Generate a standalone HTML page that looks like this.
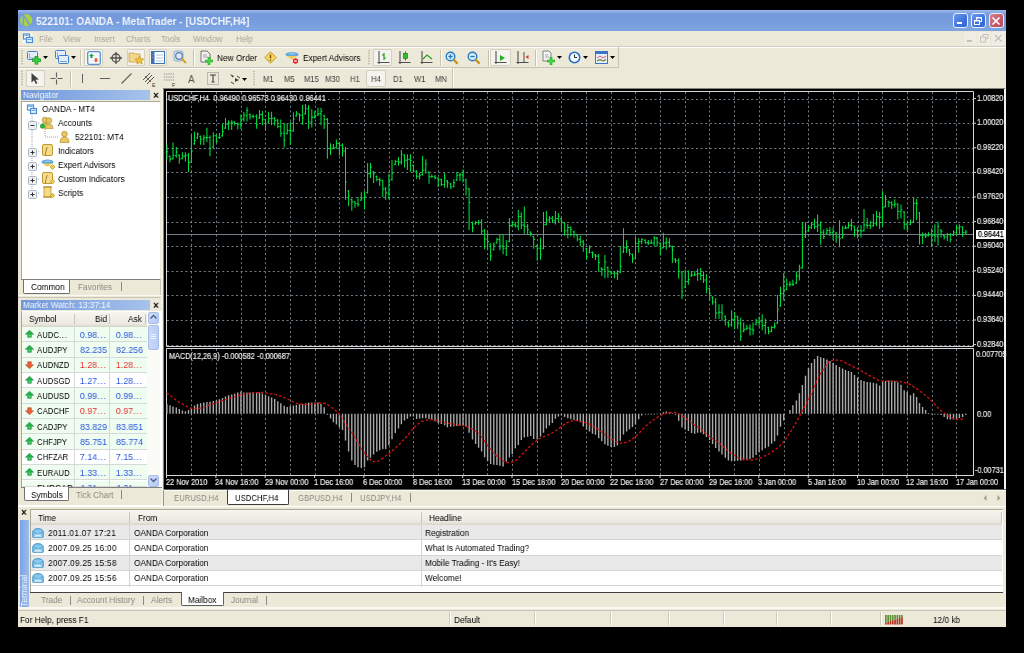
<!DOCTYPE html><html><head><meta charset="utf-8"><style>
*{margin:0;padding:0;box-sizing:border-box}
.pl,.dl,.ct,.cur,.t,.ttxt,.hdr span{will-change:transform}
.pl,.dl,.ct{color:#f4f4f4!important;-webkit-text-stroke:0.2px #e0e0e0}
.ct{word-spacing:0.3px}
html,body{width:1024px;height:653px;overflow:hidden;background:#000;font-family:"Liberation Sans",sans-serif}
.a{position:absolute}
.t{position:absolute;white-space:nowrap;font-size:9.2px;line-height:12px;color:#000;transform:scaleX(.9);transform-origin:0 0}
.r{transform-origin:100% 0}
.win{position:absolute;left:18px;top:10px;width:988px;height:617px;background:#ece9d8}
.title{position:absolute;left:18px;top:10px;width:988px;height:21px;
 background:linear-gradient(#9cbbea 0px,#8aaee6 2px,#7499dc 4px,#769cdd 12px,#7aa3e0 17px,#7ea6e2 19px,#7d9fdd 21px)}
.ttxt{position:absolute;left:36px;top:14.5px;font-size:11px;line-height:13px;font-weight:bold;color:#eef3fc;white-space:nowrap;transform:scaleX(.925);transform-origin:0 0}
.menu{color:#a9a79c}
.pl{position:absolute;left:977px;font-size:8.2px;line-height:12px;color:#e8e8e8;white-space:nowrap;transform:scaleX(.89);transform-origin:0 0}
.dl{position:absolute;top:477.3px;font-size:8.2px;line-height:12px;color:#e8e8e8;white-space:nowrap;transform:scaleX(.89);transform-origin:0 0}
.ct{position:absolute;font-size:8.2px;line-height:12px;color:#e8e8e8;white-space:nowrap;transform:scaleX(.89);transform-origin:0 0}
.cur{position:absolute;left:975.5px;top:229.5px;width:28.5px;height:8.5px;background:#fff;overflow:hidden}
.cur span{position:absolute;left:2px;top:-1.2px;color:#000;-webkit-text-stroke:0.25px #000;font-size:8.2px;line-height:12px;white-space:nowrap;transform:scaleX(.87);transform-origin:0 0;will-change:transform}
.hdr{position:absolute;height:10px;background:linear-gradient(90deg,#7097da,#a6c3ec);overflow:hidden}
.hdr span{position:absolute;left:2px;top:-1px;color:#f2f6fe;font-size:9.2px;line-height:12px;white-space:nowrap;transform:scaleX(.9);transform-origin:0 0}
.x{position:absolute;font-size:10px;font-weight:bold;line-height:10px;color:#000}
.sep{position:absolute;width:1px;background:#c5c2b2;border-right:1px solid #fff}
.tb{font-size:10px;color:#000}
</style></head><body>
<div class="win"></div>
<div class="title"></div>
<svg class="a" style="left:20px;top:13px" width="14" height="15" viewBox="0 0 14 15"><circle cx="6.2" cy="7.2" r="6.1" fill="#a9d23e"/><path d="M3.3 0 L3.3 14" stroke="#7a9fde" stroke-width="1.5"/><path d="M3.8 2.5 L10 12.5" stroke="#7a9fde" stroke-width="1.7"/></svg>
<div class="ttxt">522101: OANDA - MetaTrader - [USDCHF,H4]</div>
<div class="a" style="left:953px;top:13px;width:15px;height:15px;background:linear-gradient(135deg,#6c98ee,#3f72dc 60%,#3563cf);border:1px solid #e8eefa;border-radius:3px"></div>
<div class="a" style="left:970.5px;top:13px;width:15px;height:15px;background:linear-gradient(135deg,#6c98ee,#3f72dc 60%,#3563cf);border:1px solid #e8eefa;border-radius:3px"></div>
<div class="a" style="left:988.5px;top:13px;width:15px;height:15px;background:linear-gradient(135deg,#d9838f,#c05a68 60%,#b24a5a);border:1px solid #e8eefa;border-radius:3px"></div>
<div class="a" style="left:957px;top:22px;width:5px;height:2px;background:#fff"></div>
<svg class="a" style="left:973px;top:16px" width="10" height="10" viewBox="0 0 10 10"><rect x="3.5" y="1.5" width="5" height="4" fill="none" stroke="#fff" stroke-width="1"/><rect x="3.5" y="1" width="5" height="1.5" fill="#fff"/><rect x="1.5" y="4.5" width="5" height="4" fill="#3f72dc" stroke="#fff" stroke-width="1"/><rect x="1.5" y="4" width="5" height="1.5" fill="#fff"/></svg>
<svg class="a" style="left:991px;top:16px" width="10" height="10" viewBox="0 0 10 10"><path d="M1.5 1.5L8.5 8.5M8.5 1.5L1.5 8.5" stroke="#fff" stroke-width="1.6"/></svg>
<svg class="a" style="left:22px;top:32px" width="12" height="12" viewBox="0 0 12 12"><rect x="0.5" y="0.5" width="10" height="11" fill="#fff" opacity="0.6"/><rect x="1.5" y="2" width="6" height="5" fill="#fff" stroke="#4a8fd8" stroke-width="1.2"/><rect x="4.5" y="5.5" width="6" height="5" fill="#dff0ff" stroke="#4a8fd8" stroke-width="1.2"/><path d="M2.5 3.5h4M5.5 7.5h4" stroke="#4a8fd8" stroke-width="0.8"/></svg>
<div class="t menu" style="left:38.5px;top:32.5px;">File</div>
<div class="t menu" style="left:63px;top:32.5px;">View</div>
<div class="t menu" style="left:93.5px;top:32.5px;">Insert</div>
<div class="t menu" style="left:125.5px;top:32.5px;">Charts</div>
<div class="t menu" style="left:161px;top:32.5px;">Tools</div>
<div class="t menu" style="left:193px;top:32.5px;">Window</div>
<div class="t menu" style="left:236px;top:32.5px;">Help</div>
<div class="a" style="left:964px;top:32px;width:12px;height:13px;background:#f0eee4"></div>
<div class="a" style="left:978px;top:32px;width:12px;height:13px;background:#f0eee4"></div>
<div class="a" style="left:991.5px;top:32px;width:12.5px;height:13px;background:#f0eee4"></div>
<div class="a" style="left:966.5px;top:40px;width:5px;height:1.5px;background:#c4c2b8"></div>
<svg class="a" style="left:980px;top:34px" width="9" height="9" viewBox="0 0 9 9"><rect x="3" y="0.5" width="5" height="4" fill="none" stroke="#c4c2b8"/><rect x="0.5" y="3" width="5" height="5" fill="#f0eee4" stroke="#c4c2b8"/></svg>
<svg class="a" style="left:993.5px;top:34px" width="9" height="9" viewBox="0 0 9 9"><path d="M1 1L7.5 7.5M7.5 1L1 7.5" stroke="#c4c2b8" stroke-width="1.3"/></svg>
<div class="a" style="left:18px;top:46px;width:988px;height:1px;background:#d0cdbd"></div>
<div class="a" style="left:18px;top:47px;width:988px;height:1px;background:#fff"></div>
<div class="a" style="left:18px;top:67px;width:601px;height:1px;background:#c8c5b6"></div>
<div class="a" style="left:18px;top:68px;width:435px;height:1px;background:#fff"></div>
<div class="a" style="left:618px;top:47px;width:1px;height:21px;background:#c8c5b6"></div>
<div class="a" style="left:452px;top:68px;width:1px;height:20px;background:#c8c5b6"></div>
<div class="a" style="left:453px;top:68px;width:1px;height:20px;background:#fff"></div>
<svg class="a" style="left:21px;top:50px" width="3" height="16" viewBox="0 0 3 16"><rect x="0" y="0.0" width="2" height="1.3" fill="#c1bfb1"/><rect x="0" y="2.6" width="2" height="1.3" fill="#c1bfb1"/><rect x="0" y="5.2" width="2" height="1.3" fill="#c1bfb1"/><rect x="0" y="7.8" width="2" height="1.3" fill="#c1bfb1"/><rect x="0" y="10.4" width="2" height="1.3" fill="#c1bfb1"/><rect x="0" y="13.0" width="2" height="1.3" fill="#c1bfb1"/></svg>
<svg class="a" style="left:21px;top:71px" width="3" height="16" viewBox="0 0 3 16"><rect x="0" y="0.0" width="2" height="1.3" fill="#c1bfb1"/><rect x="0" y="2.6" width="2" height="1.3" fill="#c1bfb1"/><rect x="0" y="5.2" width="2" height="1.3" fill="#c1bfb1"/><rect x="0" y="7.8" width="2" height="1.3" fill="#c1bfb1"/><rect x="0" y="10.4" width="2" height="1.3" fill="#c1bfb1"/><rect x="0" y="13.0" width="2" height="1.3" fill="#c1bfb1"/></svg>
<svg class="a" style="left:368px;top:50px" width="3" height="16" viewBox="0 0 3 16"><rect x="0" y="0.0" width="2" height="1.3" fill="#c1bfb1"/><rect x="0" y="2.6" width="2" height="1.3" fill="#c1bfb1"/><rect x="0" y="5.2" width="2" height="1.3" fill="#c1bfb1"/><rect x="0" y="7.8" width="2" height="1.3" fill="#c1bfb1"/><rect x="0" y="10.4" width="2" height="1.3" fill="#c1bfb1"/><rect x="0" y="13.0" width="2" height="1.3" fill="#c1bfb1"/></svg>
<svg class="a" style="left:253px;top:71px" width="3" height="16" viewBox="0 0 3 16"><rect x="0" y="0.0" width="2" height="1.3" fill="#c1bfb1"/><rect x="0" y="2.6" width="2" height="1.3" fill="#c1bfb1"/><rect x="0" y="5.2" width="2" height="1.3" fill="#c1bfb1"/><rect x="0" y="7.8" width="2" height="1.3" fill="#c1bfb1"/><rect x="0" y="10.4" width="2" height="1.3" fill="#c1bfb1"/><rect x="0" y="13.0" width="2" height="1.3" fill="#c1bfb1"/></svg>
<div class="a" style="left:84px;top:49px;width:19px;height:17px;background:#f4f3ee;border:1px solid #d3d0c3;border-radius:1px"></div>
<div class="a" style="left:127px;top:49px;width:18px;height:17px;background:#f4f3ee;border:1px solid #d3d0c3;border-radius:1px"></div>
<div class="a" style="left:149px;top:49px;width:18px;height:17px;background:#f4f3ee;border:1px solid #d3d0c3;border-radius:1px"></div>
<div class="a" style="left:373px;top:49px;width:19px;height:17px;background:#f4f3ee;border:1px solid #d3d0c3;border-radius:1px"></div>
<div class="a" style="left:490px;top:49px;width:21px;height:17px;background:#f4f3ee;border:1px solid #d3d0c3;border-radius:1px"></div>
<div class="a" style="left:25.5px;top:70px;width:19px;height:17px;background:#f4f3ee;border:1px solid #d3d0c3;border-radius:1px"></div>
<div class="a" style="left:366px;top:70px;width:19.5px;height:17px;background:#f4f3ee;border:1px solid #d3d0c3;border-radius:1px"></div>
<div class="a" style="left:80px;top:50px;width:1px;height:16px;background:#c5c2b2;border-right:1px solid #fff;width:2px"></div>
<div class="a" style="left:192.5px;top:50px;width:1px;height:16px;background:#c5c2b2;border-right:1px solid #fff;width:2px"></div>
<div class="a" style="left:440px;top:50px;width:1px;height:16px;background:#c5c2b2;border-right:1px solid #fff;width:2px"></div>
<div class="a" style="left:487.5px;top:50px;width:1px;height:16px;background:#c5c2b2;border-right:1px solid #fff;width:2px"></div>
<div class="a" style="left:535px;top:50px;width:1px;height:16px;background:#c5c2b2;border-right:1px solid #fff;width:2px"></div>
<div class="a" style="left:69.5px;top:71px;width:1px;height:16px;background:#c5c2b2;border-right:1px solid #fff;width:2px"></div>
<svg class="a" style="left:27px;top:50px" width="15" height="15" viewBox="0 0 15 15"><rect x="0.5" y="1.5" width="10" height="8" rx="1" fill="#e4eefa" stroke="#3f7fc8" stroke-width="1"/><path d="M2.5 3.5v4.5h6" stroke="#6a8ab0" fill="none" stroke-width="0.7"/><path d="M9.5 6v8.5M5.3 10.3h8.5" stroke="#0e8a1e" stroke-width="3.6"/><path d="M9.5 6.6v7.3M5.9 10.3h7.3" stroke="#3ad23a" stroke-width="2.2"/></svg>
<svg class="a" style="left:43px;top:56px" width="5" height="3" viewBox="0 0 5 3"><path d="M0 0h5L2.5 3z" fill="#000"/></svg>
<svg class="a" style="left:55px;top:50px" width="15" height="15" viewBox="0 0 15 15"><rect x="0.5" y="0.5" width="10" height="8" rx="1" fill="#e4eefa" stroke="#3f7fc8"/><path d="M2.5 2.5v4.5h6" stroke="#6a8ab0" fill="none" stroke-width="0.7"/><rect x="3.5" y="5.5" width="10" height="8" rx="1" fill="#e4eefa" stroke="#3f7fc8"/><path d="M5 11.5h7" stroke="#6a8ab0" stroke-width="0.8"/></svg>
<svg class="a" style="left:70.5px;top:56px" width="5" height="3" viewBox="0 0 5 3"><path d="M0 0h5L2.5 3z" fill="#000"/></svg>
<svg class="a" style="left:86.5px;top:50.5px" width="14" height="14" viewBox="0 0 14 14"><rect x="0.7" y="0.7" width="12.6" height="12.6" rx="1.5" fill="#f6faff" stroke="#5a92d0" stroke-width="1.3"/><path d="M4.5 2.5L7 5H5.6v2H3.4V5H2z" fill="#1ea83a"/><path d="M9 11.5L6.5 9H7.9V7h2.2v2h1.4z" fill="#ec6440"/></svg>
<svg class="a" style="left:108.5px;top:50.5px" width="14" height="14" viewBox="0 0 14 14"><circle cx="7" cy="7" r="4" fill="none" stroke="#505050" stroke-width="1.3"/><path d="M7 1v12M1 7h12" stroke="#505050" stroke-width="1.3"/></svg>
<svg class="a" style="left:128px;top:50px" width="17" height="16" viewBox="0 0 17 16"><path d="M1 3h5l1 1h5v8H1z" fill="#f3d68a" stroke="#c8a040" stroke-width="0.8"/><path d="M11.5 6l1.3 2.8 3 .3-2.3 2 .7 3-2.7-1.6-2.7 1.6.7-3-2.3-2 3-.3z" fill="#f2c533" stroke="#b88a10" stroke-width="0.6"/></svg>
<svg class="a" style="left:151px;top:51px" width="14" height="13" viewBox="0 0 14 13"><rect x="0.5" y="0.5" width="13" height="12" fill="#fff" stroke="#3b73b9"/><rect x="0.5" y="0.5" width="3" height="12" fill="#3b73b9"/><path d="M5 4h7M5 7h7M5 10h7" stroke="#99b8dd" stroke-width="0.8"/><path d="M2 3v1M2 6v1" stroke="#ff7050"/></svg>
<svg class="a" style="left:173px;top:50px" width="15" height="15" viewBox="0 0 15 15"><rect x="1" y="1" width="9" height="10" rx="2" fill="#dbe9f7" stroke="#7a9cc0" stroke-width="0.8"/><circle cx="6" cy="6" r="3.3" fill="none" stroke="#5a7fa8" stroke-width="1.2"/><path d="M8.5 8.5l4.5 4.5" stroke="#d8a020" stroke-width="2"/></svg>
<svg class="a" style="left:200px;top:50px" width="14" height="16" viewBox="0 0 14 16"><path d="M1 1h6l3 3v8H1z" fill="#f0f0f0" stroke="#666" stroke-width="0.9"/><path d="M3 5h4M3 7h5" stroke="#888" stroke-width="0.7"/><path d="M9 7v8M5 11h8" stroke="#19b019" stroke-width="2.6"/><path d="M9 7.5v7M5.5 11h7" stroke="#5ee05e" stroke-width="1"/></svg>
<div class="t" style="left:216.5px;top:51.5px;">New Order</div>
<svg class="a" style="left:264px;top:51px" width="13" height="13" viewBox="0 0 13 13"><path d="M6.5 0.8L12.2 6.5 6.5 12.2 0.8 6.5z" fill="#f6d560" stroke="#c09a30" stroke-width="1"/><path d="M6.5 3.5v4" stroke="#7a5a10" stroke-width="1.4"/><circle cx="6.5" cy="9.3" r="0.8" fill="#7a5a10"/></svg>
<svg class="a" style="left:285px;top:50px" width="15" height="15" viewBox="0 0 15 15"><ellipse cx="7" cy="4.5" rx="6.5" ry="2.6" fill="#62a8dc"/><path d="M3 4.5q4-4 8 0" fill="#8fc6ec"/><path d="M2.5 6q4.5 7 9 0" fill="#f1cc55"/><circle cx="10.5" cy="11" r="3.2" fill="#e02020" stroke="#fff" stroke-width="0.8"/><rect x="9.3" y="10.3" width="2.4" height="1.4" fill="#fff"/></svg>
<div class="t" style="left:302.5px;top:51.5px;">Expert Advisors</div>
<svg class="a" style="left:377px;top:50px" width="14" height="15" viewBox="0 0 14 15"><path d="M2 1v13M0.5 12.5h12" stroke="#505050" stroke-width="1.1"/><path d="M7 3v7M5 5h2M7 8h2" stroke="#22a022" stroke-width="1.2"/></svg>
<svg class="a" style="left:398px;top:50px" width="14" height="15" viewBox="0 0 14 15"><path d="M2 1v13M0.5 12.5h12" stroke="#505050" stroke-width="1.1"/><path d="M7.5 1.5v9" stroke="#333" stroke-width="0.8"/><rect x="5.5" y="3.5" width="4" height="5" fill="#2ec02e" stroke="#156e15" stroke-width="0.6"/></svg>
<svg class="a" style="left:420px;top:50px" width="14" height="15" viewBox="0 0 14 15"><path d="M2 1v13M0.5 12.5h12" stroke="#505050" stroke-width="1.1"/><path d="M3 9l4-4 5 4" stroke="#22a022" stroke-width="1.2" fill="none"/></svg>
<svg class="a" style="left:445px;top:50.5px" width="14" height="14" viewBox="0 0 14 14"><circle cx="5.5" cy="5.5" r="4.3" fill="#d5ecfa" stroke="#2a7ac0" stroke-width="1.4"/><path d="M8.6 8.6l4 4" stroke="#c89020" stroke-width="2.2"/><path d="M3.3 5.5h4.4" stroke="#2a7ac0" stroke-width="1.3"/><path d="M5.5 3.3v4.4" stroke="#2a7ac0" stroke-width="1.3"/></svg>
<svg class="a" style="left:467px;top:50.5px" width="14" height="14" viewBox="0 0 14 14"><circle cx="5.5" cy="5.5" r="4.3" fill="#d5ecfa" stroke="#2a7ac0" stroke-width="1.4"/><path d="M8.6 8.6l4 4" stroke="#c89020" stroke-width="2.2"/><path d="M3.3 5.5h4.4" stroke="#2a7ac0" stroke-width="1.3"/></svg>
<svg class="a" style="left:494px;top:50px" width="14" height="15" viewBox="0 0 14 15"><path d="M2 1v13M0.5 12.5h12" stroke="#505050" stroke-width="1.1"/><path d="M6 5l5 3-5 3z" fill="#22b022"/></svg>
<svg class="a" style="left:516px;top:50px" width="14" height="15" viewBox="0 0 14 15"><path d="M2 1v13M0.5 12.5h12" stroke="#505050" stroke-width="1.1"/><path d="M8 2v10" stroke="#505050" stroke-width="1"/><path d="M9.5 7l3-2v4z" fill="#e03030"/></svg>
<svg class="a" style="left:542px;top:50px" width="15" height="15" viewBox="0 0 15 15"><path d="M1 1h6l2 2v8H1z" fill="#f4f4f4" stroke="#777" stroke-width="0.9"/><path d="M3 5h3M3 7h4" stroke="#888" stroke-width="0.7"/><path d="M9 7v8M5 11h8" stroke="#19b019" stroke-width="2.6"/><path d="M9 7.5v7M5.5 11h7" stroke="#5ee05e" stroke-width="1"/></svg>
<svg class="a" style="left:556.5px;top:56px" width="5" height="3" viewBox="0 0 5 3"><path d="M0 0h5L2.5 3z" fill="#000"/></svg>
<svg class="a" style="left:568px;top:51px" width="13" height="13" viewBox="0 0 13 13"><circle cx="6.5" cy="6.5" r="6" fill="#2a6fc8"/><circle cx="6.5" cy="6.5" r="4.4" fill="#f4f8ff"/><path d="M6.5 3.5v3h2.5" stroke="#222" stroke-width="1" fill="none"/></svg>
<svg class="a" style="left:583px;top:56px" width="5" height="3" viewBox="0 0 5 3"><path d="M0 0h5L2.5 3z" fill="#000"/></svg>
<svg class="a" style="left:595px;top:51px" width="13" height="13" viewBox="0 0 13 13"><rect x="0.5" y="0.5" width="12" height="12" fill="#e8f2fb" stroke="#3a76c4"/><rect x="0.5" y="0.5" width="12" height="2.5" fill="#3a76c4"/><path d="M2 7l3-2 3 2 3-2M2 10l3-2 3 2 3-2" stroke="#d03030" stroke-width="0.8" fill="none"/><path d="M2 10l3-1 3 1 3-1" stroke="#30a030" stroke-width="0.8" fill="none"/></svg>
<svg class="a" style="left:609.5px;top:56px" width="5" height="3" viewBox="0 0 5 3"><path d="M0 0h5L2.5 3z" fill="#000"/></svg>
<svg class="a" style="left:30px;top:72px" width="10" height="13" viewBox="0 0 10 13"><path d="M1.5 1v9.5l2.5-2.2 1.8 3.8 1.6-.8-1.8-3.6 3.3-.2z" fill="#404040"/></svg>
<svg class="a" style="left:50px;top:72px" width="13" height="13" viewBox="0 0 13 13"><path d="M6.5 0.5v5M6.5 7.5v5M0.5 6.5h5M7.5 6.5h5" stroke="#606060" stroke-width="1.1"/></svg>
<div class="a" style="left:82px;top:74px;width:1.2px;height:9px;background:#606060"></div>
<div class="a" style="left:100px;top:78px;width:10px;height:1.2px;background:#606060"></div>
<svg class="a" style="left:121px;top:73px" width="11" height="11" viewBox="0 0 11 11"><path d="M0.5 10.5L10.5 0.5" stroke="#606060" stroke-width="1.1"/></svg>
<svg class="a" style="left:142px;top:72px" width="14" height="15" viewBox="0 0 14 15"><path d="M1 8L8 1M3 10L10 3M5 12L12 5" stroke="#555" stroke-width="1"/><path d="M3 4l6 6" stroke="#555" stroke-width="0.8"/><text x="10" y="14.5" font-size="5" font-family="Liberation Sans" fill="#333">E</text></svg>
<svg class="a" style="left:163px;top:72px" width="14" height="15" viewBox="0 0 14 15"><path d="M1 2h10M1 5h10M1 8h10" stroke="#777" stroke-width="0.8" stroke-dasharray="1.2,1"/><text x="9" y="14.5" font-size="5" font-family="Liberation Sans" fill="#333">F</text></svg>
<div class="t" style="left:187.5px;top:73px;font-size:11px;color:#505050">A</div>
<svg class="a" style="left:207px;top:72px" width="12" height="13" viewBox="0 0 12 13"><rect x="0.5" y="0.5" width="11" height="12" fill="none" stroke="#888" stroke-dasharray="1,1"/><path d="M3 3h6M6 3v7M4.5 10h3" stroke="#404040" stroke-width="1.1"/></svg>
<svg class="a" style="left:229px;top:73px" width="12" height="12" viewBox="0 0 12 12"><path d="M1 1l4 2-1.5 1.5zM6 5l4 2-4 2z" fill="#404040"/><path d="M2 9l3 2M8 3L11 5" stroke="#404040"/></svg>
<svg class="a" style="left:241.5px;top:78px" width="5" height="3" viewBox="0 0 5 3"><path d="M0 0h5L2.5 3z" fill="#000"/></svg>
<div class="t" style="left:262.5px;top:73px;font-size:8.5px;color:#404040">M1</div>
<div class="t" style="left:284px;top:73px;font-size:8.5px;color:#404040">M5</div>
<div class="t" style="left:303.5px;top:73px;font-size:8.5px;color:#404040">M15</div>
<div class="t" style="left:325px;top:73px;font-size:8.5px;color:#404040">M30</div>
<div class="t" style="left:349.5px;top:73px;font-size:8.5px;color:#404040">H1</div>
<div class="t" style="left:370.5px;top:73px;font-size:8.5px;color:#404040">H4</div>
<div class="t" style="left:393px;top:73px;font-size:8.5px;color:#404040">D1</div>
<div class="t" style="left:414px;top:73px;font-size:8.5px;color:#404040">W1</div>
<div class="t" style="left:435px;top:73px;font-size:8.5px;color:#404040">MN</div>
<div class="hdr" style="left:21px;top:90px;width:129px"><span>Navigator</span></div>
<div class="t" style="left:153px;top:89px;font-size:11px;font-weight:bold;line-height:12px">&#215;</div>
<div class="a" style="left:21px;top:101px;width:139px;height:178px;background:#fff;border-left:1px solid #aca899;border-top:1px solid #aca899"></div>
<div class="t" style="left:41.5px;top:103px;">OANDA - MT4</div>
<div class="t" style="left:58px;top:117px;">Accounts</div>
<div class="t" style="left:74.5px;top:131px;">522101: MT4</div>
<div class="t" style="left:58px;top:145px;">Indicators</div>
<div class="t" style="left:58px;top:159px;">Expert Advisors</div>
<div class="t" style="left:58px;top:173px;">Custom Indicators</div>
<div class="t" style="left:58px;top:186.5px;">Scripts</div>
<svg class="a" style="left:26px;top:114px" width="40" height="86" viewBox="0 0 40 86"><path d="M6 0V80M6 9h8M19 15V23h14M6 37h8M6 51h8M6 65h8M6 79h8" stroke="#a0a0a0" stroke-width="1" stroke-dasharray="1,1" fill="none"/></svg>
<svg class="a" style="left:28px;top:120.5px" width="9" height="9" viewBox="0 0 9 9"><rect x="0.5" y="0.5" width="8" height="8" rx="1" fill="#eef0f2" stroke="#a8b4c4"/><path d="M2.5 4.5h4" stroke="#303030"/></svg>
<svg class="a" style="left:28px;top:147.5px" width="9" height="9" viewBox="0 0 9 9"><rect x="0.5" y="0.5" width="8" height="8" rx="1" fill="#eef0f2" stroke="#a8b4c4"/><path d="M2.5 4.5h4" stroke="#303030"/><path d="M4.5 2.5v4" stroke="#303030"/></svg>
<svg class="a" style="left:28px;top:161.5px" width="9" height="9" viewBox="0 0 9 9"><rect x="0.5" y="0.5" width="8" height="8" rx="1" fill="#eef0f2" stroke="#a8b4c4"/><path d="M2.5 4.5h4" stroke="#303030"/><path d="M4.5 2.5v4" stroke="#303030"/></svg>
<svg class="a" style="left:28px;top:175.5px" width="9" height="9" viewBox="0 0 9 9"><rect x="0.5" y="0.5" width="8" height="8" rx="1" fill="#eef0f2" stroke="#a8b4c4"/><path d="M2.5 4.5h4" stroke="#303030"/><path d="M4.5 2.5v4" stroke="#303030"/></svg>
<svg class="a" style="left:28px;top:189.5px" width="9" height="9" viewBox="0 0 9 9"><rect x="0.5" y="0.5" width="8" height="8" rx="1" fill="#eef0f2" stroke="#a8b4c4"/><path d="M2.5 4.5h4" stroke="#303030"/><path d="M4.5 2.5v4" stroke="#303030"/></svg>
<svg class="a" style="left:26px;top:103px" width="12" height="12" viewBox="0 0 12 12"><rect x="0.5" y="0.5" width="10" height="11" fill="#fff" opacity="0.6"/><rect x="1.5" y="2" width="6" height="5" fill="#fff" stroke="#4a8fd8" stroke-width="1.2"/><rect x="4.5" y="5.5" width="6" height="5" fill="#dff0ff" stroke="#4a8fd8" stroke-width="1.2"/><path d="M2.5 3.5h4M5.5 7.5h4" stroke="#4a8fd8" stroke-width="0.8"/></svg>
<svg class="a" style="left:40px;top:116px" width="14" height="13" viewBox="0 0 14 13"><circle cx="5" cy="4" r="2.8" fill="#e7c860" stroke="#a88020" stroke-width="0.6"/><path d="M1 12q0-5 4-5t4 5z" fill="#e7c860" stroke="#a88020" stroke-width="0.6"/><circle cx="2.5" cy="10" r="2.5" fill="#30b040"/><circle cx="9" cy="4.5" r="2.8" fill="#e7c860" stroke="#a88020" stroke-width="0.6"/><path d="M5 13q0-5 4-5t4 5z" fill="#e7c860" stroke="#a88020" stroke-width="0.6"/></svg>
<svg class="a" style="left:59px;top:130px" width="11" height="13" viewBox="0 0 11 13"><circle cx="5.5" cy="4" r="2.8" fill="#e7c860" stroke="#a88020" stroke-width="0.6"/><path d="M1 12.5q0-5.5 4.5-5.5t4.5 5.5z" fill="#e7c860" stroke="#a88020" stroke-width="0.6"/></svg>
<svg class="a" style="left:42px;top:144px" width="11" height="12" viewBox="0 0 11 12"><rect x="0.5" y="0.5" width="10" height="11" rx="1.5" fill="#f5dc8a" stroke="#c09830"/><text x="3" y="9" font-size="8" font-style="italic" font-family="Liberation Serif" fill="#806010">f</text></svg>
<svg class="a" style="left:41px;top:158px" width="14" height="13" viewBox="0 0 14 13"><ellipse cx="6.5" cy="4" rx="6" ry="2.5" fill="#62a8dc"/><path d="M3 4q3.5-3.5 7 0" fill="#8fc6ec"/><path d="M2.5 5.5q4 6 8 0" fill="#f1cc55"/><path d="M9 9l2.5-2.5 2.5 2.5-2.5 2.5z" fill="#f1cc55" stroke="#b08a20" stroke-width="0.6"/></svg>
<svg class="a" style="left:42px;top:172px" width="13" height="13" viewBox="0 0 13 13"><rect x="0.5" y="0.5" width="10" height="11" rx="1.5" fill="#f5dc8a" stroke="#c09830"/><text x="3" y="9" font-size="8" font-style="italic" font-family="Liberation Serif" fill="#806010">f</text><path d="M8.5 9.5l2.2-2.2 2.2 2.2-2.2 2.2z" fill="#f1cc55" stroke="#b08a20" stroke-width="0.6"/></svg>
<svg class="a" style="left:42px;top:186px" width="13" height="13" viewBox="0 0 13 13"><path d="M2 1h7v10H2z" fill="#f5dc8a" stroke="#b08a20" stroke-width="0.7"/><path d="M1 1h9M1 11h9" stroke="#b08a20" stroke-width="1.2"/><path d="M8.5 9.5l2.2-2.2 2.2 2.2-2.2 2.2z" fill="#f1cc55" stroke="#b08a20" stroke-width="0.6"/></svg>
<div class="a" style="left:21px;top:279px;width:139px;height:1px;background:#808080"></div>
<div class="a" style="left:159.5px;top:279px;width:1px;height:16px;background:#c8c5b8"></div>
<div class="a" style="left:23px;top:279.5px;width:47px;height:14px;background:#fff;border:1px solid #707070;border-top:none;border-radius:0 0 2px 2px"></div>
<div class="t" style="left:30.5px;top:280.5px;">Common</div>
<div class="t" style="left:77.5px;top:280.5px;color:#8a8a80">Favorites</div>
<div class="a" style="left:120.5px;top:282px;width:1px;height:9px;background:#8a8a80"></div>
<div class="a" style="left:18px;top:294.8px;width:145px;height:1px;background:#fbfaf4"></div>
<div class="a" style="left:18px;top:296.6px;width:145px;height:1px;background:#c9c6b8"></div>
<div class="a" style="left:160.5px;top:89px;width:2.5px;height:419px;background:#f2f0e6"></div>
<div class="hdr" style="left:21px;top:299.5px;width:128.5px"><span>Market Watch: 13:37:14</span></div>
<div class="t" style="left:153px;top:298.5px;font-size:11px;font-weight:bold;line-height:12px">&#215;</div>
<div class="a" style="left:21px;top:311px;width:141px;height:176px;background:#fff;border-left:1px solid #aca899"></div>
<div class="a" style="left:22px;top:311.5px;width:125px;height:15px;background:linear-gradient(#f6f5ef,#ebe9e0 80%,#d6d3c6)"></div>
<div class="t" style="left:28.5px;top:313px;">Symbol</div>
<div class="t" style="left:94.5px;top:313px;">Bid</div>
<div class="t" style="left:128px;top:313px;">Ask</div>
<div class="a" style="left:74px;top:314px;width:1px;height:10px;background:#c8c5b8"></div>
<div class="a" style="left:109px;top:314px;width:1px;height:10px;background:#c8c5b8"></div>
<div class="a" style="left:145px;top:314px;width:1px;height:10px;background:#c8c5b8"></div>
<div class="a" style="left:22px;top:327.0px;width:125px;height:15.35px;background:#eefdf0;border-bottom:1px solid #d8d8d8;overflow:hidden"></div>
<svg class="a" style="left:24.5px;top:330.0px" width="9" height="8" viewBox="0 0 9 8"><path d="M4.5 0.3L8.6 4.2H6.3V7.3H2.7V4.2H0.4z" fill="#22b04a" stroke="#0e7a2e" stroke-width="0.5"/><path d="M3.5 4.5h2v2h-2z" fill="#5fd07a"/></svg>
<div class="t" style="left:37px;top:328.5px;transform:scaleX(.84)">AUDC<span style="letter-spacing:0.9px">...</span></div>
<div class="t" style="left:71.2px;top:328.5px;color:#2a55e0;width:36px;text-align:right;transform-origin:100% 0;transform:scaleX(.96)">0.98<span style="letter-spacing:0.9px">...</span></div>
<div class="t" style="left:107px;top:328.5px;color:#2a55e0;width:36px;text-align:right;transform-origin:100% 0;transform:scaleX(.96)">0.98<span style="letter-spacing:0.9px">...</span></div>
<div class="a" style="left:22px;top:342.35px;width:125px;height:15.35px;background:#eefdf0;border-bottom:1px solid #d8d8d8;overflow:hidden"></div>
<svg class="a" style="left:24.5px;top:345.35px" width="9" height="8" viewBox="0 0 9 8"><path d="M4.5 0.3L8.6 4.2H6.3V7.3H2.7V4.2H0.4z" fill="#22b04a" stroke="#0e7a2e" stroke-width="0.5"/><path d="M3.5 4.5h2v2h-2z" fill="#5fd07a"/></svg>
<div class="t" style="left:37px;top:343.85px;transform:scaleX(.84)">AUDJPY</div>
<div class="t" style="left:71.2px;top:343.85px;color:#2a55e0;width:36px;text-align:right;transform-origin:100% 0;transform:scaleX(.96)">82.235</div>
<div class="t" style="left:107px;top:343.85px;color:#2a55e0;width:36px;text-align:right;transform-origin:100% 0;transform:scaleX(.96)">82.256</div>
<div class="a" style="left:22px;top:357.7px;width:125px;height:15.35px;background:#eefdf0;border-bottom:1px solid #d8d8d8;overflow:hidden"></div>
<svg class="a" style="left:24.5px;top:361.2px" width="9" height="8" viewBox="0 0 9 8"><path d="M4.5 7.7L8.6 3.8H6.3V0.7H2.7V3.8H0.4z" fill="#e8603a" stroke="#b83a1a" stroke-width="0.5"/></svg>
<div class="t" style="left:37px;top:359.2px;transform:scaleX(.84)">AUDNZD</div>
<div class="t" style="left:71.2px;top:359.2px;color:#e83030;width:36px;text-align:right;transform-origin:100% 0;transform:scaleX(.96)">1.28<span style="letter-spacing:0.9px">...</span></div>
<div class="t" style="left:107px;top:359.2px;color:#e83030;width:36px;text-align:right;transform-origin:100% 0;transform:scaleX(.96)">1.28<span style="letter-spacing:0.9px">...</span></div>
<div class="a" style="left:22px;top:373.05px;width:125px;height:15.35px;background:#ffffff;border-bottom:1px solid #d8d8d8;overflow:hidden"></div>
<svg class="a" style="left:24.5px;top:376.05px" width="9" height="8" viewBox="0 0 9 8"><path d="M4.5 0.3L8.6 4.2H6.3V7.3H2.7V4.2H0.4z" fill="#22b04a" stroke="#0e7a2e" stroke-width="0.5"/><path d="M3.5 4.5h2v2h-2z" fill="#5fd07a"/></svg>
<div class="t" style="left:37px;top:374.55px;transform:scaleX(.84)">AUDSGD</div>
<div class="t" style="left:71.2px;top:374.55px;color:#2a55e0;width:36px;text-align:right;transform-origin:100% 0;transform:scaleX(.96)">1.27<span style="letter-spacing:0.9px">...</span></div>
<div class="t" style="left:107px;top:374.55px;color:#2a55e0;width:36px;text-align:right;transform-origin:100% 0;transform:scaleX(.96)">1.28<span style="letter-spacing:0.9px">...</span></div>
<div class="a" style="left:22px;top:388.4px;width:125px;height:15.35px;background:#eefdf0;border-bottom:1px solid #d8d8d8;overflow:hidden"></div>
<svg class="a" style="left:24.5px;top:391.4px" width="9" height="8" viewBox="0 0 9 8"><path d="M4.5 0.3L8.6 4.2H6.3V7.3H2.7V4.2H0.4z" fill="#22b04a" stroke="#0e7a2e" stroke-width="0.5"/><path d="M3.5 4.5h2v2h-2z" fill="#5fd07a"/></svg>
<div class="t" style="left:37px;top:389.9px;transform:scaleX(.84)">AUDUSD</div>
<div class="t" style="left:71.2px;top:389.9px;color:#2a55e0;width:36px;text-align:right;transform-origin:100% 0;transform:scaleX(.96)">0.99<span style="letter-spacing:0.9px">...</span></div>
<div class="t" style="left:107px;top:389.9px;color:#2a55e0;width:36px;text-align:right;transform-origin:100% 0;transform:scaleX(.96)">0.99<span style="letter-spacing:0.9px">...</span></div>
<div class="a" style="left:22px;top:403.75px;width:125px;height:15.35px;background:#eefdf0;border-bottom:1px solid #d8d8d8;overflow:hidden"></div>
<svg class="a" style="left:24.5px;top:407.25px" width="9" height="8" viewBox="0 0 9 8"><path d="M4.5 7.7L8.6 3.8H6.3V0.7H2.7V3.8H0.4z" fill="#e8603a" stroke="#b83a1a" stroke-width="0.5"/></svg>
<div class="t" style="left:37px;top:405.25px;transform:scaleX(.84)">CADCHF</div>
<div class="t" style="left:71.2px;top:405.25px;color:#e83030;width:36px;text-align:right;transform-origin:100% 0;transform:scaleX(.96)">0.97<span style="letter-spacing:0.9px">...</span></div>
<div class="t" style="left:107px;top:405.25px;color:#e83030;width:36px;text-align:right;transform-origin:100% 0;transform:scaleX(.96)">0.97<span style="letter-spacing:0.9px">...</span></div>
<div class="a" style="left:22px;top:419.1px;width:125px;height:15.35px;background:#eefdf0;border-bottom:1px solid #d8d8d8;overflow:hidden"></div>
<svg class="a" style="left:24.5px;top:422.1px" width="9" height="8" viewBox="0 0 9 8"><path d="M4.5 0.3L8.6 4.2H6.3V7.3H2.7V4.2H0.4z" fill="#22b04a" stroke="#0e7a2e" stroke-width="0.5"/><path d="M3.5 4.5h2v2h-2z" fill="#5fd07a"/></svg>
<div class="t" style="left:37px;top:420.6px;transform:scaleX(.84)">CADJPY</div>
<div class="t" style="left:71.2px;top:420.6px;color:#2a55e0;width:36px;text-align:right;transform-origin:100% 0;transform:scaleX(.96)">83.829</div>
<div class="t" style="left:107px;top:420.6px;color:#2a55e0;width:36px;text-align:right;transform-origin:100% 0;transform:scaleX(.96)">83.851</div>
<div class="a" style="left:22px;top:434.45px;width:125px;height:15.35px;background:#eefdf0;border-bottom:1px solid #d8d8d8;overflow:hidden"></div>
<svg class="a" style="left:24.5px;top:437.45px" width="9" height="8" viewBox="0 0 9 8"><path d="M4.5 0.3L8.6 4.2H6.3V7.3H2.7V4.2H0.4z" fill="#22b04a" stroke="#0e7a2e" stroke-width="0.5"/><path d="M3.5 4.5h2v2h-2z" fill="#5fd07a"/></svg>
<div class="t" style="left:37px;top:435.95px;transform:scaleX(.84)">CHFJPY</div>
<div class="t" style="left:71.2px;top:435.95px;color:#2a55e0;width:36px;text-align:right;transform-origin:100% 0;transform:scaleX(.96)">85.751</div>
<div class="t" style="left:107px;top:435.95px;color:#2a55e0;width:36px;text-align:right;transform-origin:100% 0;transform:scaleX(.96)">85.774</div>
<div class="a" style="left:22px;top:449.8px;width:125px;height:15.35px;background:#ffffff;border-bottom:1px solid #d8d8d8;overflow:hidden"></div>
<svg class="a" style="left:24.5px;top:452.8px" width="9" height="8" viewBox="0 0 9 8"><path d="M4.5 0.3L8.6 4.2H6.3V7.3H2.7V4.2H0.4z" fill="#22b04a" stroke="#0e7a2e" stroke-width="0.5"/><path d="M3.5 4.5h2v2h-2z" fill="#5fd07a"/></svg>
<div class="t" style="left:37px;top:451.3px;transform:scaleX(.84)">CHFZAR</div>
<div class="t" style="left:71.2px;top:451.3px;color:#2a55e0;width:36px;text-align:right;transform-origin:100% 0;transform:scaleX(.96)">7.14<span style="letter-spacing:0.9px">...</span></div>
<div class="t" style="left:107px;top:451.3px;color:#2a55e0;width:36px;text-align:right;transform-origin:100% 0;transform:scaleX(.96)">7.15<span style="letter-spacing:0.9px">...</span></div>
<div class="a" style="left:22px;top:465.15px;width:125px;height:15.35px;background:#eefdf0;border-bottom:1px solid #d8d8d8;overflow:hidden"></div>
<svg class="a" style="left:24.5px;top:468.15px" width="9" height="8" viewBox="0 0 9 8"><path d="M4.5 0.3L8.6 4.2H6.3V7.3H2.7V4.2H0.4z" fill="#22b04a" stroke="#0e7a2e" stroke-width="0.5"/><path d="M3.5 4.5h2v2h-2z" fill="#5fd07a"/></svg>
<div class="t" style="left:37px;top:466.65px;transform:scaleX(.84)">EURAUD</div>
<div class="t" style="left:71.2px;top:466.65px;color:#2a55e0;width:36px;text-align:right;transform-origin:100% 0;transform:scaleX(.96)">1.33<span style="letter-spacing:0.9px">...</span></div>
<div class="t" style="left:107px;top:466.65px;color:#2a55e0;width:36px;text-align:right;transform-origin:100% 0;transform:scaleX(.96)">1.33<span style="letter-spacing:0.9px">...</span></div>
<div class="a" style="left:22px;top:480.5px;width:125px;height:6.5px;background:#eefdf0;border-bottom:1px solid #d8d8d8;overflow:hidden"></div>
<div class="a" style="left:22px;top:479px;width:125px;height:8px;overflow:hidden"><div class="t" style="left:15px;top:3px;font-size:9.5px">EURCAD</div><div class="t" style="left:53px;top:3px;color:#2a55e0;width:32px;text-align:right">1.31...</div><div class="t" style="left:88px;top:3px;color:#2a55e0;width:33px;text-align:right">1.31...</div></div>
<div class="a" style="left:74px;top:327px;width:1px;height:160px;background:#d8d8d8"></div>
<div class="a" style="left:109px;top:327px;width:1px;height:160px;background:#d8d8d8"></div>
<div class="a" style="left:147px;top:311px;width:13px;height:176px;background:#fbfbf8"></div>
<div class="a" style="left:148px;top:311.5px;width:11px;height:12px;background:linear-gradient(135deg,#cfdcf8,#b4c9f2);border:1px solid #a8bde8;border-radius:2px"></div>
<svg class="a" style="left:150px;top:314px" width="7" height="5" viewBox="0 0 7 5"><path d="M0.5 4.5L3.5 1.5 6.5 4.5" stroke="#4d6185" stroke-width="1.4" fill="none"/></svg>
<div class="a" style="left:148px;top:324.5px;width:11px;height:25px;background:linear-gradient(90deg,#c9d8f6,#b9cdf4);border:1px solid #a8bde8;border-radius:2px"></div>
<div class="a" style="left:151px;top:334px;width:5px;height:1px;background:#eef3fd"></div>
<div class="a" style="left:151px;top:336px;width:5px;height:1px;background:#eef3fd"></div>
<div class="a" style="left:151px;top:338px;width:5px;height:1px;background:#eef3fd"></div>
<div class="a" style="left:148px;top:475px;width:11px;height:12px;background:linear-gradient(135deg,#cfdcf8,#b4c9f2);border:1px solid #a8bde8;border-radius:2px"></div>
<svg class="a" style="left:150px;top:478px" width="7" height="5" viewBox="0 0 7 5"><path d="M0.5 0.5L3.5 3.5 6.5 0.5" stroke="#4d6185" stroke-width="1.4" fill="none"/></svg>
<div class="a" style="left:21px;top:486.5px;width:141px;height:1px;background:#808080"></div>
<div class="a" style="left:23.5px;top:487px;width:45px;height:14px;background:#fff;border:1px solid #707070;border-top:none;border-radius:0 0 2px 2px"></div>
<div class="t" style="left:30.5px;top:488.5px;">Symbols</div>
<div class="t" style="left:76px;top:488.5px;color:#8a8a80">Tick Chart</div>
<div class="a" style="left:121px;top:490px;width:1px;height:9px;background:#8a8a80"></div>
<div class="a" style="left:18px;top:504.5px;width:146px;height:1px;background:#fff"></div>
<div class="a" style="left:164px;top:89px;width:841px;height:400px;background:#000"></div>
<div class="a" style="left:1004px;top:89px;width:2px;height:400px;background:#f4f3ee"></div>
<div class="a" style="left:163px;top:88px;width:842px;height:1px;background:#85837a"></div>
<div class="a" style="left:163px;top:88px;width:1px;height:401px;background:#85837a"></div>
<svg width="1024" height="653" style="position:absolute;left:0;top:0">
<path d="M191.5 92V346M191.5 349V475M216.5 92V346M216.5 349V475M241.5 92V346M241.5 349V475M265.5 92V346M265.5 349V475M290.5 92V346M290.5 349V475M315.5 92V346M315.5 349V475M339.5 92V346M339.5 349V475M364.5 92V346M364.5 349V475M389.5 92V346M389.5 349V475M413.5 92V346M413.5 349V475M438.5 92V346M438.5 349V475M463.5 92V346M463.5 349V475M487.5 92V346M487.5 349V475M512.5 92V346M512.5 349V475M537.5 92V346M537.5 349V475M561.5 92V346M561.5 349V475M586.5 92V346M586.5 349V475M611.5 92V346M611.5 349V475M635.5 92V346M635.5 349V475M660.5 92V346M660.5 349V475M685.5 92V346M685.5 349V475M709.5 92V346M709.5 349V475M734.5 92V346M734.5 349V475M759.5 92V346M759.5 349V475M784.5 92V346M784.5 349V475M808.5 92V346M808.5 349V475M833.5 92V346M833.5 349V475M858.5 92V346M858.5 349V475M882.5 92V346M882.5 349V475M907.5 92V346M907.5 349V475M932.5 92V346M932.5 349V475M956.5 92V346M956.5 349V475M167 99.5H973M167 123.5H973M167 148.5H973M167 172.5H973M167 197.5H973M167 222.5H973M167 246.5H973M167 271.5H973M167 295.5H973M167 320.5H973M167 345.5H973" stroke="#727e88" stroke-width="1" stroke-dasharray="2,2.6" fill="none"/>
<path d="M166.5 91.5H973.5V346.5H166.5Z M166.5 348.5H973.5V475.5H166.5Z" stroke="#d8d8d8" stroke-width="1" fill="none"/>
<path d="M167 234.5H973" stroke="#6f7d88" stroke-width="1"/>
<path d="M166.90 413.8V404.1M170.00 413.8V405.3M173.00 413.8V406.4M176.30 413.8V407.6M179.30 413.8V409.1M182.40 413.8V410.5M185.40 413.8V411.2M188.50 413.8V409.9M191.40 413.8V407.8M194.50 413.8V405.5M197.50 413.8V404.0M200.60 413.8V403.3M203.80 413.8V402.5M206.90 413.8V402.1M210.00 413.8V401.8M213.30 413.8V401.1M216.40 413.8V400.4M219.40 413.8V399.3M222.50 413.8V398.0M225.50 413.8V396.5M228.60 413.8V395.3M231.70 413.8V394.5M234.70 413.8V393.7M237.80 413.8V392.5M240.90 413.8V391.6M243.90 413.8V392.4M247.00 413.8V392.4M250.00 413.8V392.4M253.10 413.8V392.4M256.60 413.8V392.4M259.50 413.8V392.5M262.40 413.8V393.5M265.50 413.8V394.8M268.60 413.8V396.2M271.60 413.8V397.5M274.70 413.8V399.1M277.80 413.8V401.2M280.80 413.8V403.2M284.20 413.8V405.7M287.20 413.8V406.9M290.30 413.8V406.2M293.40 413.8V405.4M296.40 413.8V404.7M299.50 413.8V404.3M302.60 413.8V404.0M305.50 413.8V403.3M308.60 413.8V402.5M311.80 413.8V402.5M314.80 413.8V402.5M318.00 413.8V402.5M321.00 413.8V404.0M324.20 413.8V407.2M327.40 413.8V414.7M330.50 413.8V418.6M333.40 413.8V422.3M336.40 413.8V424.5M339.40 413.8V426.9M342.50 413.8V430.0M345.50 413.8V440.6M348.60 413.8V451.6M351.80 413.8V460.4M355.00 413.8V465.0M358.00 413.8V467.3M361.30 413.8V467.9M364.50 413.8V467.3M367.60 413.8V460.6M370.50 413.8V457.7M373.60 413.8V454.6M376.80 413.8V451.7M379.70 413.8V450.2M382.80 413.8V449.0M385.70 413.8V449.0M388.90 413.8V445.2M392.00 413.8V439.2M395.30 413.8V433.0M398.50 413.8V428.6M401.40 413.8V424.3M404.50 413.8V420.5M407.40 413.8V418.7M410.40 413.8V416.6M413.40 413.8V416.4M416.60 413.8V419.0M419.60 413.8V418.6M422.60 413.8V418.3M425.80 413.8V418.2M429.00 413.8V419.1M431.80 413.8V419.8M435.00 413.8V421.3M438.20 413.8V422.9M441.40 413.8V424.0M444.60 413.8V425.3M447.40 413.8V427.2M450.70 413.8V426.8M453.80 413.8V426.3M456.90 413.8V425.9M460.00 413.8V425.4M463.00 413.8V425.0M466.00 413.8V426.5M469.10 413.8V432.8M472.50 413.8V439.6M475.60 413.8V444.1M478.60 413.8V447.8M481.60 413.8V451.5M484.60 413.8V457.3M487.60 413.8V461.0M490.60 413.8V464.0M493.80 413.8V464.7M496.90 413.8V465.0M499.90 413.8V465.7M503.10 413.8V466.5M506.30 413.8V461.4M509.40 413.8V457.5M512.30 413.8V454.0M515.30 413.8V448.2M518.30 413.8V444.9M521.30 413.8V439.9M524.30 413.8V437.6M527.60 413.8V436.8M530.70 413.8V436.1M533.70 413.8V438.9M537.20 413.8V439.6M540.50 413.8V436.6M543.50 413.8V432.7M546.40 413.8V428.5M549.40 413.8V425.4M552.40 413.8V423.1M555.40 413.8V418.8M558.40 413.8V416.5M561.40 413.8V415.5M564.60 413.8V417.1M567.80 413.8V418.2M570.80 413.8V419.3M574.00 413.8V420.0M577.30 413.8V420.9M580.30 413.8V422.2M583.30 413.8V426.5M586.50 413.8V429.7M589.50 413.8V431.4M592.50 413.8V433.8M595.50 413.8V434.7M598.70 413.8V438.3M601.80 413.8V441.2M604.90 413.8V444.2M607.90 413.8V445.7M611.10 413.8V447.0M614.40 413.8V446.9M617.40 413.8V445.5M620.30 413.8V440.7M623.50 413.8V434.5M626.60 413.8V431.5M629.50 413.8V429.3M632.50 413.8V427.1M635.50 413.8V424.6M638.70 413.8V419.3M641.70 413.8V415.6M645.30 413.8V414.5M648.30 413.8V414.4M651.30 413.8V414.4M654.20 413.8V414.4M657.10 413.8V414.3M660.30 413.8V413.2M663.40 413.8V412.2M666.30 413.8V411.5M669.40 413.8V412.0M672.40 413.8V413.2M675.50 413.8V414.8M678.70 413.8V420.7M682.00 413.8V427.5M685.20 413.8V429.4M688.40 413.8V431.1M691.60 413.8V433.1M694.70 413.8V433.8M697.60 413.8V432.7M700.70 413.8V432.6M703.50 413.8V434.2M706.40 413.8V436.9M709.60 413.8V440.1M712.60 413.8V444.0M715.70 413.8V448.1M719.00 413.8V451.5M722.00 413.8V454.5M725.30 413.8V457.8M728.40 413.8V460.6M731.60 413.8V461.3M734.70 413.8V461.1M737.70 413.8V460.8M740.70 413.8V460.6M743.70 413.8V460.3M746.80 413.8V459.8M750.00 413.8V459.3M753.00 413.8V457.8M756.10 413.8V455.0M759.10 413.8V452.2M762.20 413.8V450.2M765.30 413.8V448.3M768.50 413.8V446.7M771.60 413.8V443.8M774.60 413.8V441.2M777.50 413.8V435.5M780.50 413.8V426.8M783.70 413.8V420.4M786.70 413.8V413.7M789.90 413.8V410.0M792.90 413.8V405.3M796.40 413.8V400.6M799.40 413.8V393.2M802.40 413.8V385.1M805.50 413.8V375.8M808.50 413.8V367.9M811.50 413.8V362.9M814.50 413.8V358.9M817.60 413.8V356.0M820.70 413.8V357.3M823.70 413.8V358.1M826.90 413.8V359.5M829.90 413.8V361.0M833.10 413.8V363.0M836.20 413.8V365.1M839.50 413.8V366.9M842.60 413.8V368.6M845.50 413.8V369.9M848.50 413.8V370.9M851.40 413.8V371.9M854.50 413.8V375.0M857.60 413.8V377.6M861.00 413.8V379.9M864.00 413.8V380.9M867.20 413.8V381.9M870.30 413.8V382.3M873.40 413.8V382.8M876.50 413.8V383.4M879.60 413.8V385.4M882.60 413.8V381.7M885.50 413.8V381.0M888.80 413.8V380.4M891.70 413.8V380.6M894.80 413.8V380.9M897.80 413.8V382.2M901.00 413.8V384.8M904.20 413.8V390.2M907.20 413.8V391.9M910.50 413.8V395.3M913.60 413.8V393.3M916.60 413.8V397.0M919.50 413.8V403.0M922.60 413.8V406.9M925.60 413.8V409.9M928.50 413.8V412.9M931.70 413.8V414.5M934.90 413.8V414.6M938.00 413.8V414.6M941.10 413.8V415.0M944.20 413.8V417.0M947.40 413.8V419.2M950.30 413.8V419.6M953.50 413.8V419.6M956.50 413.8V419.0M959.40 413.8V418.0M962.60 413.8V417.0M965.80 413.8V414.9" stroke="#aaaaaa" stroke-width="1.4" fill="none"/>
<path d="M166.6,393.0 L169.6,395.2 L172.6,397.4 L175.6,399.7 L178.6,401.9 L181.6,403.5 L184.6,405.2 L187.6,406.9 L190.6,408.4 L193.6,408.4 L196.6,408.4 L199.6,408.4 L202.6,407.5 L205.6,406.3 L208.6,405.2 L211.6,404.2 L214.6,403.3 L217.6,402.3 L220.6,401.3 L223.6,400.3 L226.6,399.2 L229.6,398.2 L232.6,397.3 L235.6,396.4 L238.6,395.6 L241.6,394.9 L244.6,394.2 L247.6,393.6 L250.6,392.9 L253.6,392.7 L256.6,392.6 L259.6,392.5 L262.6,392.4 L265.6,392.8 L268.6,393.3 L271.6,393.8 L274.6,394.4 L277.6,395.1 L280.6,396.1 L283.6,397.4 L286.6,398.6 L289.6,400.0 L292.6,401.5 L295.6,403.0 L298.6,403.6 L301.6,404.0 L304.6,404.5 L307.6,404.5 L310.6,404.2 L313.6,403.8 L316.6,403.4 L319.6,403.0 L322.6,403.2 L325.6,403.5 L328.6,405.4 L331.6,407.5 L334.6,409.8 L337.6,412.1 L340.6,416.0 L343.6,420.6 L346.6,425.1 L349.6,429.6 L352.6,434.0 L355.6,438.7 L358.6,443.8 L361.6,448.9 L364.6,453.2 L367.6,456.6 L370.6,460.1 L373.6,461.7 L376.6,461.9 L379.6,460.5 L382.6,458.4 L385.6,456.1 L388.6,453.8 L391.6,451.5 L394.6,448.7 L397.6,446.0 L400.6,443.0 L403.6,439.7 L406.6,436.5 L409.6,432.8 L412.6,429.2 L415.6,426.2 L418.6,423.6 L421.6,421.3 L424.6,420.6 L427.6,419.8 L430.6,419.7 L433.6,419.9 L436.6,420.3 L439.6,421.3 L442.6,422.2 L445.6,422.8 L448.6,423.3 L451.6,423.9 L454.6,424.5 L457.6,425.0 L460.6,425.4 L463.6,425.7 L466.6,426.6 L469.6,427.8 L472.6,429.2 L475.6,431.0 L478.6,432.8 L481.6,436.8 L484.6,441.1 L487.6,445.4 L490.6,449.2 L493.6,452.6 L496.6,456.0 L499.6,458.4 L502.6,460.5 L505.6,462.5 L508.6,462.5 L511.6,462.0 L514.6,461.6 L517.6,458.8 L520.6,455.8 L523.6,452.7 L526.6,449.7 L529.6,446.8 L532.6,443.8 L535.6,441.6 L538.6,439.3 L541.6,437.3 L544.6,436.3 L547.6,435.2 L550.6,434.0 L553.6,432.0 L556.6,430.0 L559.6,427.9 L562.6,425.7 L565.6,423.5 L568.6,421.9 L571.6,421.1 L574.6,420.4 L577.6,420.9 L580.6,421.3 L583.6,422.1 L586.6,423.1 L589.6,424.1 L592.6,425.8 L595.6,427.8 L598.6,429.7 L601.6,432.0 L604.6,434.4 L607.6,436.8 L610.6,438.5 L613.6,440.3 L616.6,441.9 L619.6,442.9 L622.6,443.5 L625.6,442.4 L628.6,441.3 L631.6,439.4 L634.6,437.3 L637.6,434.8 L640.6,431.6 L643.6,428.3 L646.6,425.4 L649.6,422.9 L652.6,420.5 L655.6,418.4 L658.6,416.6 L661.6,414.8 L664.6,413.8 L667.6,413.1 L670.6,412.5 L673.6,412.4 L676.6,412.7 L679.6,414.2 L682.6,416.2 L685.6,418.2 L688.6,420.4 L691.6,422.7 L694.6,424.9 L697.6,426.9 L700.6,428.9 L703.6,431.1 L706.6,434.1 L709.6,436.6 L712.6,438.6 L715.6,440.6 L718.6,442.6 L721.6,445.0 L724.6,447.7 L727.6,450.4 L730.6,452.9 L733.6,454.7 L736.6,456.5 L739.6,458.3 L742.6,459.0 L745.6,459.6 L748.6,460.2 L751.6,460.0 L754.6,459.4 L757.6,458.8 L760.6,458.0 L763.6,456.5 L766.6,455.0 L769.6,453.5 L772.6,451.4 L775.6,449.3 L778.6,447.2 L781.6,444.0 L784.6,440.2 L787.6,436.5 L790.6,431.6 L793.6,426.7 L796.6,421.6 L799.6,416.0 L802.6,410.4 L805.6,404.7 L808.6,399.1 L811.6,393.3 L814.6,386.3 L817.6,379.2 L820.6,373.3 L823.6,369.2 L826.6,365.1 L829.6,360.9 L832.6,360.4 L835.6,360.2 L838.6,360.1 L841.6,360.8 L844.6,362.3 L847.6,363.8 L850.6,365.3 L853.6,366.8 L856.6,368.3 L859.6,369.8 L862.6,371.6 L865.6,373.4 L868.6,375.1 L871.6,376.8 L874.6,378.2 L877.6,379.8 L880.6,380.9 L883.6,381.0 L886.6,381.2 L889.6,381.4 L892.6,381.4 L895.6,381.4 L898.6,381.4 L901.6,381.9 L904.6,382.6 L907.6,383.3 L910.6,384.6 L913.6,386.7 L916.6,388.8 L919.6,391.0 L922.6,393.3 L925.6,395.7 L928.6,398.1 L931.6,401.0 L934.6,404.2 L937.6,407.4 L940.6,410.3 L943.6,412.5 L946.6,414.8 L949.6,416.6 L952.6,418.1 L955.6,419.6 L958.6,419.4 L961.6,419.2 L964.6,419.1" stroke="#d81010" stroke-width="1.3" stroke-dasharray="2.6,2" fill="none"/>
<path d="M166.90 144.7V159.6M165.60 152.1h1.3M166.90 151.7h1.3M170.00 155.4V162.3M168.70 156.4h1.3M170.00 159.1h1.3M173.00 142.4V159.6M171.70 158.6h1.3M173.00 155.4h1.3M176.30 147.0V157.7M175.00 155.4h1.3M176.30 152.1h1.3M179.30 154.2V163.8M178.00 155.2h1.3M179.30 159.0h1.3M182.40 152.3V159.2M181.10 158.2h1.3M182.40 156.1h1.3M185.40 152.3V161.5M184.10 156.1h1.3M185.40 155.2h1.3M188.50 153.0V171.9M187.20 155.2h1.3M188.50 162.6h1.3M191.40 134.7V163.0M190.10 162.0h1.3M191.40 151.1h1.3M194.50 131.7V144.7M193.20 143.7h1.3M194.50 140.5h1.3M197.50 132.4V139.0M196.20 138.0h1.3M197.50 134.1h1.3M200.60 135.5V144.7M199.30 136.5h1.3M200.60 139.0h1.3M203.80 135.1V145.0M202.50 139.0h1.3M203.80 137.6h1.3M206.90 127.8V142.0M205.60 137.6h1.3M206.90 137.5h1.3M210.00 135.5V156.2M208.70 137.5h1.3M210.00 148.3h1.3M213.30 132.2V147.9M212.00 146.9h1.3M213.30 135.7h1.3M216.40 134.5V142.9M215.10 135.7h1.3M216.40 141.1h1.3M219.40 132.9V138.7M218.10 137.7h1.3M219.40 137.4h1.3M222.50 124.1V136.8M221.20 135.8h1.3M222.50 131.6h1.3M225.50 118.0V129.1M224.20 128.1h1.3M225.50 124.3h1.3M228.60 120.3V129.9M227.30 124.3h1.3M228.60 123.1h1.3M231.70 120.3V129.9M230.40 123.1h1.3M231.70 122.3h1.3M234.70 121.0V125.6M233.40 122.3h1.3M234.70 123.4h1.3M237.80 122.6V129.5M236.50 123.6h1.3M237.80 124.2h1.3M240.90 114.5V129.1M239.60 124.2h1.3M240.90 119.1h1.3M243.90 111.9V121.4M242.60 119.1h1.3M243.90 115.2h1.3M247.00 107.3V121.4M245.70 115.2h1.3M247.00 110.4h1.3M250.00 113.4V119.5M248.70 114.4h1.3M250.00 116.3h1.3M253.10 114.5V118.4M251.80 116.3h1.3M253.10 116.3h1.3M256.60 114.5V128.7M255.30 116.3h1.3M256.60 124.5h1.3M259.50 110.0V119.0M258.20 118.0h1.3M259.50 114.6h1.3M262.40 111.0V125.2M261.10 114.6h1.3M262.40 119.3h1.3M265.50 118.7V129.0M264.20 119.7h1.3M265.50 123.8h1.3M268.60 111.8V122.9M267.30 121.9h1.3M268.60 118.4h1.3M271.60 111.8V125.2M270.30 118.4h1.3M271.60 118.2h1.3M274.70 117.1V125.6M273.40 118.2h1.3M274.70 120.2h1.3M277.80 119.1V128.2M276.50 120.2h1.3M277.80 126.4h1.3M280.80 119.4V136.7M279.50 126.4h1.3M280.80 133.2h1.3M284.20 122.9V147.4M282.90 133.2h1.3M284.20 140.2h1.3M287.20 124.0V134.4M285.90 133.4h1.3M287.20 130.5h1.3M290.30 122.1V145.1M289.00 130.5h1.3M290.30 131.1h1.3M293.40 112.5V131.7M292.10 130.7h1.3M293.40 119.0h1.3M296.40 111.0V116.8M295.10 115.8h1.3M296.40 113.2h1.3M299.50 113.3V121.4M298.20 114.3h1.3M299.50 115.3h1.3M302.60 104.9V124.8M301.30 115.3h1.3M302.60 118.0h1.3M305.50 104.1V114.6M304.20 113.6h1.3M305.50 108.7h1.3M308.60 105.0V129.0M307.30 108.7h1.3M308.60 122.0h1.3M311.80 109.2V127.6M310.50 122.0h1.3M311.80 117.1h1.3M314.80 111.0V118.8M313.50 117.1h1.3M314.80 117.0h1.3M318.00 107.8V116.0M316.70 115.0h1.3M318.00 113.6h1.3M321.00 107.8V125.3M319.70 113.6h1.3M321.00 111.3h1.3M324.20 114.7V129.0M322.90 115.7h1.3M324.20 119.4h1.3M327.40 118.0V158.8M326.10 119.4h1.3M327.40 148.4h1.3M330.50 143.2V155.1M329.20 148.4h1.3M330.50 148.9h1.3M333.40 144.1V149.2M332.10 148.2h1.3M333.40 148.1h1.3M336.40 139.5V148.7M335.10 147.7h1.3M336.40 143.5h1.3M339.40 141.8V155.6M338.10 143.5h1.3M339.40 145.2h1.3M342.50 143.3V156.5M341.20 145.2h1.3M342.50 150.9h1.3M345.50 146.9V199.8M344.20 150.9h1.3M345.50 182.2h1.3M348.60 190.0V206.1M347.30 191.0h1.3M348.60 195.8h1.3M351.80 198.6V210.7M350.50 199.6h1.3M351.80 201.7h1.3M355.00 200.9V207.8M353.70 201.9h1.3M355.00 203.7h1.3M358.00 196.9V206.7M356.70 203.7h1.3M358.00 204.5h1.3M361.30 192.3V200.9M360.00 199.9h1.3M361.30 197.9h1.3M364.50 191.1V209.5M363.20 197.9h1.3M364.50 196.1h1.3M367.60 163.0V193.4M366.30 192.4h1.3M367.60 173.6h1.3M370.50 163.0V178.0M369.20 173.6h1.3M370.50 166.9h1.3M373.60 171.0V183.1M372.30 172.0h1.3M373.60 173.9h1.3M376.80 175.6V181.4M375.50 176.6h1.3M376.80 179.5h1.3M379.70 177.4V186.0M378.40 179.5h1.3M379.70 180.0h1.3M382.80 179.7V196.9M381.50 180.7h1.3M382.80 188.9h1.3M385.70 187.1V199.8M384.40 188.9h1.3M385.70 193.0h1.3M388.90 173.9V199.2M387.60 193.0h1.3M388.90 181.9h1.3M392.00 160.1V180.8M390.70 179.8h1.3M392.00 173.3h1.3M395.30 160.1V165.3M394.00 164.3h1.3M395.30 161.5h1.3M398.50 157.0V165.7M397.20 161.5h1.3M398.50 162.1h1.3M401.40 150.1V164.4M400.10 162.1h1.3M401.40 154.0h1.3M404.50 154.2V167.6M403.20 155.2h1.3M404.50 160.3h1.3M407.40 154.2V169.9M406.10 160.3h1.3M407.40 159.3h1.3M410.40 154.2V171.7M409.10 159.3h1.3M410.40 160.5h1.3M413.40 164.4V172.6M412.10 165.4h1.3M413.40 170.8h1.3M416.60 170.3V179.0M415.30 171.3h1.3M416.60 176.2h1.3M419.60 172.6V179.5M418.30 176.2h1.3M419.60 175.2h1.3M422.60 156.1V175.4M421.30 174.4h1.3M422.60 170.2h1.3M425.80 159.3V173.5M424.50 170.2h1.3M425.80 163.9h1.3M429.00 171.3V183.7M427.70 172.3h1.3M429.00 176.7h1.3M431.80 174.5V177.7M430.50 176.7h1.3M431.80 176.8h1.3M435.00 175.0V179.5M433.70 176.8h1.3M435.00 177.6h1.3M438.20 177.2V186.9M436.90 178.2h1.3M438.20 179.7h1.3M441.40 178.6V186.0M440.10 179.7h1.3M441.40 184.5h1.3M444.60 173.1V187.8M443.30 184.5h1.3M444.60 177.9h1.3M447.40 180.0V187.8M446.10 181.0h1.3M447.40 182.8h1.3M450.70 183.0V189.0M449.40 184.0h1.3M450.70 187.0h1.3M453.80 179.3V187.5M452.50 186.5h1.3M453.80 182.6h1.3M456.90 171.9V181.0M455.60 180.0h1.3M456.90 175.3h1.3M460.00 172.7V181.0M458.70 175.3h1.3M460.00 174.7h1.3M463.00 169.6V182.6M461.70 174.7h1.3M463.00 172.9h1.3M466.00 178.8V195.6M464.70 179.8h1.3M466.00 188.0h1.3M469.10 188.0V230.0M467.80 189.0h1.3M469.10 202.5h1.3M472.50 221.6V232.3M471.20 222.6h1.3M472.50 227.6h1.3M475.60 220.9V224.7M474.30 223.7h1.3M475.60 222.5h1.3M478.60 220.1V224.7M477.30 222.5h1.3M478.60 222.3h1.3M481.60 219.0V234.3M480.30 222.3h1.3M481.60 230.9h1.3M484.60 228.9V249.3M483.30 230.9h1.3M484.60 238.9h1.3M487.60 232.3V249.3M486.30 238.9h1.3M487.60 241.6h1.3M490.60 243.3V260.7M489.30 244.3h1.3M490.60 255.8h1.3M493.80 242.6V250.5M492.50 249.5h1.3M493.80 245.0h1.3M496.90 237.8V243.8M495.60 242.8h1.3M496.90 239.6h1.3M499.90 234.3V250.2M498.60 239.6h1.3M499.90 246.1h1.3M503.10 234.8V254.2M501.80 246.1h1.3M503.10 248.2h1.3M506.30 240.3V256.0M505.00 248.2h1.3M506.30 245.8h1.3M509.40 217.9V242.3M508.10 241.3h1.3M509.40 225.6h1.3M512.30 220.9V226.9M511.00 225.6h1.3M512.30 224.8h1.3M515.30 221.9V227.4M514.00 224.8h1.3M515.30 226.1h1.3M518.30 210.0V230.3M517.00 226.1h1.3M518.30 216.5h1.3M521.30 212.4V228.9M520.00 216.5h1.3M521.30 225.1h1.3M524.30 206.5V233.8M523.00 225.1h1.3M524.30 226.4h1.3M527.60 223.9V234.3M526.30 226.4h1.3M527.60 229.7h1.3M530.70 231.3V236.3M529.40 232.3h1.3M530.70 233.6h1.3M533.70 235.8V248.8M532.40 236.8h1.3M533.70 239.2h1.3M537.20 244.8V260.7M535.90 245.8h1.3M537.20 248.3h1.3M540.50 237.8V259.7M539.20 248.3h1.3M540.50 254.8h1.3M543.50 212.0V249.3M542.20 248.3h1.3M543.50 224.8h1.3M546.40 211.0V225.4M545.10 224.4h1.3M546.40 220.0h1.3M549.40 216.0V222.4M548.10 220.0h1.3M549.40 218.3h1.3M552.40 216.0V222.9M551.10 218.3h1.3M552.40 220.8h1.3M555.40 211.0V224.4M554.10 220.8h1.3M555.40 218.5h1.3M558.40 213.0V221.9M557.10 218.5h1.3M558.40 216.3h1.3M561.40 217.9V231.8M560.10 218.9h1.3M561.40 222.1h1.3M564.60 221.9V235.8M563.30 222.9h1.3M564.60 230.7h1.3M567.80 223.9V238.3M566.50 230.7h1.3M567.80 227.4h1.3M570.80 226.4V236.3M569.50 227.4h1.3M570.80 229.7h1.3M574.00 230.8V237.8M572.70 231.8h1.3M574.00 234.5h1.3M577.30 234.3V241.3M576.00 235.3h1.3M577.30 239.3h1.3M580.30 235.8V246.3M579.00 239.3h1.3M580.30 241.8h1.3M583.30 239.8V251.7M582.00 241.8h1.3M583.30 244.2h1.3M586.50 247.8V259.7M585.20 248.8h1.3M586.50 256.7h1.3M589.50 245.3V253.2M588.20 252.2h1.3M589.50 247.8h1.3M592.50 251.5V258.0M591.20 252.5h1.3M592.50 252.9h1.3M595.50 254.0V259.9M594.20 255.0h1.3M595.50 256.1h1.3M598.70 254.0V271.9M597.40 256.1h1.3M598.70 262.4h1.3M601.80 267.3V276.0M600.50 268.3h1.3M601.80 269.4h1.3M604.90 254.9V278.3M603.60 269.4h1.3M604.90 262.1h1.3M607.90 266.4V277.8M606.60 267.4h1.3M607.90 271.2h1.3M611.10 271.0V275.1M609.80 272.0h1.3M611.10 273.2h1.3M614.40 271.4V278.3M613.10 273.2h1.3M614.40 273.3h1.3M617.40 270.0V280.1M616.10 273.3h1.3M617.40 274.2h1.3M620.30 246.1V273.3M619.00 272.3h1.3M620.30 266.1h1.3M623.50 228.2V253.0M622.20 252.0h1.3M623.50 247.7h1.3M626.60 240.2V253.0M625.30 247.7h1.3M626.60 247.8h1.3M629.50 248.9V256.3M628.20 249.9h1.3M629.50 253.4h1.3M632.50 253.5V263.1M631.20 254.5h1.3M632.50 258.8h1.3M635.50 237.0V259.0M634.20 258.0h1.3M635.50 243.3h1.3M638.70 238.3V252.6M637.40 243.3h1.3M638.70 241.5h1.3M641.70 238.3V244.3M640.40 241.5h1.3M641.70 239.6h1.3M645.30 239.3V243.7M644.00 240.3h1.3M645.30 242.6h1.3M648.30 240.1V245.0M647.00 242.6h1.3M648.30 243.1h1.3M651.30 239.4V244.0M650.00 243.0h1.3M651.30 243.0h1.3M654.20 235.9V246.3M652.90 243.0h1.3M654.20 238.1h1.3M657.10 237.1V246.3M655.80 238.1h1.3M657.10 242.5h1.3M660.30 242.2V255.5M659.00 243.2h1.3M660.30 248.7h1.3M663.40 233.0V248.6M662.10 247.6h1.3M663.40 243.0h1.3M666.30 237.6V249.7M665.00 243.0h1.3M666.30 242.3h1.3M669.40 238.2V247.4M668.10 242.3h1.3M669.40 245.6h1.3M672.40 245.7V263.0M671.10 246.7h1.3M672.40 249.9h1.3M675.50 258.3V263.0M674.20 259.3h1.3M675.50 260.8h1.3M678.70 258.3V278.4M677.40 260.8h1.3M678.70 271.2h1.3M682.00 271.0V299.1M680.70 272.0h1.3M682.00 291.8h1.3M685.20 269.8V288.2M683.90 287.2h1.3M685.20 281.6h1.3M688.40 270.4V284.8M687.10 281.6h1.3M688.40 279.4h1.3M691.60 271.0V276.7M690.30 275.7h1.3M691.60 274.9h1.3M694.70 271.0V276.1M693.40 274.9h1.3M694.70 274.8h1.3M697.60 268.7V280.7M696.30 274.8h1.3M697.60 273.6h1.3M700.70 268.1V280.2M699.40 273.6h1.3M700.70 275.5h1.3M703.50 271.5V283.0M702.20 275.5h1.3M703.50 280.0h1.3M706.40 274.2V293.2M705.10 280.0h1.3M706.40 287.9h1.3M709.60 287.7V300.5M708.30 288.7h1.3M709.60 293.5h1.3M712.60 296.2V304.8M711.30 297.2h1.3M712.60 302.0h1.3M715.70 298.0V318.9M714.40 302.0h1.3M715.70 313.0h1.3M719.00 304.2V318.9M717.70 313.0h1.3M719.00 312.2h1.3M722.00 304.2V320.7M720.70 312.2h1.3M722.00 313.7h1.3M725.30 315.2V325.6M724.00 316.2h1.3M725.30 319.7h1.3M728.40 321.3V327.4M727.10 322.3h1.3M728.40 324.7h1.3M731.60 310.3V326.8M730.30 324.7h1.3M731.60 319.6h1.3M734.70 312.1V329.3M733.40 319.6h1.3M734.70 316.4h1.3M737.70 315.8V328.7M736.40 316.8h1.3M737.70 323.3h1.3M740.70 317.7V340.9M739.40 323.3h1.3M740.70 336.2h1.3M743.70 322.5V332.3M742.40 331.3h1.3M743.70 329.6h1.3M746.80 325.0V329.9M745.50 328.9h1.3M746.80 328.1h1.3M750.00 324.4V335.4M748.70 328.1h1.3M750.00 329.2h1.3M753.00 322.5V334.8M751.70 329.2h1.3M753.00 330.4h1.3M756.10 318.7V325.2M754.80 324.2h1.3M756.10 322.3h1.3M759.10 316.4V326.7M757.80 322.3h1.3M759.10 321.2h1.3M762.20 314.3V330.2M760.90 321.2h1.3M762.20 325.5h1.3M765.30 318.4V334.3M764.00 325.5h1.3M765.30 322.4h1.3M768.50 326.7V334.3M767.20 327.7h1.3M768.50 331.6h1.3M771.60 326.0V332.2M770.30 331.2h1.3M771.60 327.4h1.3M774.60 322.6V328.8M773.30 327.4h1.3M774.60 326.1h1.3M777.50 295.0V324.0M776.20 323.0h1.3M777.50 309.2h1.3M780.50 286.7V306.7M779.20 305.7h1.3M780.50 293.5h1.3M783.70 273.0V300.5M782.40 293.5h1.3M783.70 290.0h1.3M786.70 278.4V290.2M785.40 289.2h1.3M786.70 284.3h1.3M789.90 281.2V286.7M788.60 284.3h1.3M789.90 284.3h1.3M792.90 279.8V286.0M791.60 284.3h1.3M792.90 284.5h1.3M796.40 271.6V284.0M795.10 283.0h1.3M796.40 276.0h1.3M799.40 264.7V280.5M798.10 276.0h1.3M799.40 268.0h1.3M802.40 222.2V268.8M801.10 267.8h1.3M802.40 239.9h1.3M805.50 222.2V237.9M804.20 236.9h1.3M805.50 231.7h1.3M808.50 225.2V231.5M807.20 230.5h1.3M808.50 227.2h1.3M811.50 222.2V229.1M810.20 227.2h1.3M811.50 224.3h1.3M814.50 218.8V229.1M813.20 224.3h1.3M814.50 226.5h1.3M817.60 214.4V232.0M816.30 226.5h1.3M817.60 224.9h1.3M820.70 221.2V244.8M819.40 224.9h1.3M820.70 232.2h1.3M823.70 229.6V238.9M822.40 232.2h1.3M823.70 236.4h1.3M826.90 228.1V234.0M825.60 233.0h1.3M826.90 230.4h1.3M829.90 227.1V236.0M828.60 230.4h1.3M829.90 232.4h1.3M833.10 227.6V239.9M831.80 232.4h1.3M833.10 231.5h1.3M836.20 232.0V242.8M834.90 233.0h1.3M836.20 237.0h1.3M839.50 220.3V247.2M838.20 237.0h1.3M839.50 238.7h1.3M842.60 226.1V238.4M841.30 237.4h1.3M842.60 235.3h1.3M845.50 225.6V229.1M844.20 228.1h1.3M845.50 228.1h1.3M848.50 222.7V228.6M847.20 227.6h1.3M848.50 225.2h1.3M851.40 218.8V230.5M850.10 225.2h1.3M851.40 225.2h1.3M854.50 225.7V236.7M853.20 226.7h1.3M854.50 230.0h1.3M857.60 227.2V238.6M856.30 230.0h1.3M857.60 230.4h1.3M861.00 225.2V237.5M859.70 230.4h1.3M861.00 231.3h1.3M864.00 209.0V231.6M862.70 230.6h1.3M864.00 224.9h1.3M867.20 217.9V228.6M865.90 224.9h1.3M867.20 225.5h1.3M870.30 220.8V229.1M869.00 225.5h1.3M870.30 226.0h1.3M873.40 213.9V226.7M872.10 225.7h1.3M873.40 223.8h1.3M876.50 211.0V226.2M875.20 223.8h1.3M876.50 216.6h1.3M879.60 212.0V229.1M878.30 216.6h1.3M879.60 217.2h1.3M882.60 190.9V226.7M881.30 217.2h1.3M882.60 207.7h1.3M885.50 194.8V207.6M884.20 206.6h1.3M885.50 199.5h1.3M888.80 200.7V207.1M887.50 201.7h1.3M888.80 202.8h1.3M891.70 201.2V209.0M890.40 202.8h1.3M891.70 204.7h1.3M894.80 199.2V207.6M893.50 204.7h1.3M894.80 204.0h1.3M897.80 203.2V219.8M896.50 204.2h1.3M897.80 211.4h1.3M901.00 204.6V218.4M899.70 211.4h1.3M901.00 210.0h1.3M904.20 211.0V229.6M902.90 212.0h1.3M904.20 224.1h1.3M907.20 222.0V230.0M905.90 224.1h1.3M907.20 228.3h1.3M910.50 219.4V225.3M909.20 224.3h1.3M910.50 222.2h1.3M913.60 196.9V222.8M912.30 221.8h1.3M913.60 203.2h1.3M916.60 198.8V219.9M915.30 203.2h1.3M916.60 203.4h1.3M919.50 212.0V244.4M918.20 213.0h1.3M919.50 235.4h1.3M922.60 232.6V243.9M921.30 235.4h1.3M922.60 235.1h1.3M925.60 233.1V238.0M924.30 235.1h1.3M925.60 236.2h1.3M928.50 232.2V236.6M927.20 235.6h1.3M928.50 234.6h1.3M931.70 228.2V246.4M930.40 234.6h1.3M931.70 235.2h1.3M934.90 224.3V242.0M933.60 235.2h1.3M934.90 236.2h1.3M938.00 221.4V245.4M936.70 236.2h1.3M938.00 226.5h1.3M941.10 229.2V237.5M939.80 230.2h1.3M941.10 231.5h1.3M944.20 234.6V239.5M942.90 235.6h1.3M944.20 236.9h1.3M947.40 233.1V241.0M946.10 236.9h1.3M947.40 234.8h1.3M950.30 233.1V242.5M949.00 234.8h1.3M950.30 239.7h1.3M953.50 230.2V236.1M952.20 235.1h1.3M953.50 232.2h1.3M956.50 224.8V235.6M955.20 232.2h1.3M956.50 227.9h1.3M959.40 224.3V234.1M958.10 227.9h1.3M959.40 226.5h1.3M962.60 226.3V237.1M961.30 227.3h1.3M962.60 232.5h1.3M965.80 229.7V234.6M964.50 232.5h1.3M965.80 232.0h1.3" stroke="#00e040" stroke-width="1.05" fill="none"/>
<path d="M973 98.6h3M973 123.2h3M973 147.8h3M973 172.4h3M973 197.0h3M973 221.6h3M973 246.2h3M973 270.8h3M973 295.4h3M973 320.0h3M973 344.6h3M166.5 475v3M215.9 475v3M265.2 475v3M314.6 475v3M363.9 475v3M413.3 475v3M462.7 475v3M512.0 475v3M561.4 475v3M610.7 475v3M660.1 475v3M709.5 475v3M758.8 475v3M808.2 475v3M857.5 475v3M906.9 475v3M956.3 475v3" stroke="#d8d8d8" stroke-width="1"/>
</svg>
<div class="pl" style="top:92.6px">1.00820</div>
<div class="pl" style="top:117.2px">1.00020</div>
<div class="pl" style="top:141.8px">0.99220</div>
<div class="pl" style="top:166.4px">0.98420</div>
<div class="pl" style="top:191.0px">0.97620</div>
<div class="pl" style="top:215.6px">0.96840</div>
<div class="pl" style="top:240.2px">0.96040</div>
<div class="pl" style="top:264.8px">0.95240</div>
<div class="pl" style="top:289.4px">0.94440</div>
<div class="pl" style="top:314.0px">0.93640</div>
<div class="pl" style="top:338.6px">0.92840</div>
<div class="pl" style="top:349px;left:975.5px">0.007705</div>
<div class="pl" style="top:408.5px">0.00</div>
<div class="pl" style="top:465px;left:975px">-0.00731</div>
<div class="cur"><span>0.96441</span></div>
<div class="dl" style="left:166.0px">22 Nov 2010</div>
<div class="dl" style="left:215.4px">24 Nov 16:00</div>
<div class="dl" style="left:264.7px">29 Nov 00:00</div>
<div class="dl" style="left:314.1px">1 Dec 16:00</div>
<div class="dl" style="left:363.4px">6 Dec 00:00</div>
<div class="dl" style="left:412.8px">8 Dec 16:00</div>
<div class="dl" style="left:462.2px">13 Dec 00:00</div>
<div class="dl" style="left:511.5px">15 Dec 16:00</div>
<div class="dl" style="left:560.9px">20 Dec 00:00</div>
<div class="dl" style="left:610.2px">22 Dec 16:00</div>
<div class="dl" style="left:659.6px">27 Dec 00:00</div>
<div class="dl" style="left:709.0px">29 Dec 16:00</div>
<div class="dl" style="left:758.3px">3 Jan 00:00</div>
<div class="dl" style="left:807.7px">5 Jan 16:00</div>
<div class="dl" style="left:857.0px">10 Jan 00:00</div>
<div class="dl" style="left:906.4px">12 Jan 16:00</div>
<div class="dl" style="left:955.8px">17 Jan 00:00</div>
<div class="ct" style="left:168px;top:92.5px">USDCHF,H4&nbsp; 0.96490 0.96573 0.96430 0.96441</div>
<div class="ct" style="left:169px;top:351px">MACD(12,26,9) -0.000582 -0.000687</div>
<div class="a" style="left:164px;top:489px;width:842px;height:1.2px;background:#5c5c5c"></div>
<div class="a" style="left:164px;top:490.2px;width:842px;height:1px;background:#fbfaf5"></div>
<div class="a" style="left:163.2px;top:490px;width:1px;height:15.5px;background:#9a988e"></div>
<div class="a" style="left:227px;top:490px;width:62px;height:14.5px;background:#fff;border:1px solid #3c3c3c;border-top:none;border-radius:0 0 2px 2px"></div>
<div class="t" style="left:174px;top:491.5px;color:#8a8a80;transform:scaleX(.84)">EURUSD,H4</div>
<div class="t" style="left:235px;top:491.5px;transform:scaleX(.84)">USDCHF,H4</div>
<div class="t" style="left:298px;top:491.5px;color:#8a8a80;transform:scaleX(.84)">GBPUSD,H4</div>
<div class="a" style="left:351px;top:493px;width:1px;height:9px;background:#8a8a80"></div>
<div class="t" style="left:359.5px;top:491.5px;color:#8a8a80;transform:scaleX(.84)">USDJPY,H4</div>
<div class="a" style="left:410px;top:493px;width:1px;height:9px;background:#8a8a80"></div>
<svg class="a" style="left:982px;top:494px" width="6" height="8" viewBox="0 0 6 8"><path d="M4.5 1L1.5 4 4.5 7z" fill="#a0a098"/></svg>
<svg class="a" style="left:996px;top:494px" width="6" height="8" viewBox="0 0 6 8"><path d="M1.5 1L4.5 4 1.5 7z" fill="#a0a098"/></svg>
<div class="a" style="left:18px;top:506px;width:988px;height:1px;background:#fff"></div>
<div class="t" style="left:21px;top:506px;font-size:11px;font-weight:bold;line-height:12px">&#215;</div>
<div class="a" style="left:19.5px;top:520px;width:9.5px;height:87.5px;background:linear-gradient(90deg,#7aa2e2,#9dbcee)"></div>
<div class="a" style="left:19.3px;top:606.5px;transform:rotate(-90deg);transform-origin:0 0;font-size:8.5px;line-height:10px;color:#eef3fd;white-space:nowrap;will-change:transform">Terminal</div>
<div class="a" style="left:30px;top:509px;width:973px;height:83px;background:#fff;border-left:1px solid #aca899;border-top:1px solid #aca899"></div>
<div class="a" style="left:31px;top:510px;width:971px;height:15px;background:linear-gradient(#f6f5ef,#ebe9e0 80%,#d6d3c6)"></div>
<div class="a" style="left:129px;top:512px;width:1px;height:11px;background:#c8c5b8"></div>
<div class="a" style="left:421px;top:512px;width:1px;height:11px;background:#c8c5b8"></div>
<div class="a" style="left:1000.5px;top:512px;width:1px;height:11px;background:#c8c5b8"></div>
<div class="t" style="left:38px;top:511.5px;">Time</div>
<div class="t" style="left:138px;top:511.5px;">From</div>
<div class="t" style="left:428.5px;top:511.5px;">Headline</div>
<div class="a" style="left:31px;top:525.0px;width:971px;height:15.3px;background:#e9e9e9;border-bottom:1px solid #d4d4d4"></div>
<svg class="a" style="left:31.5px;top:527.5px" width="12" height="10" viewBox="0 0 12 10"><path d="M0.8 9.2V4.2Q0.8 0.7 6 0.7Q11.2 0.7 11.2 4.2V9.2Z" fill="#86c8ee" stroke="#3a8ec2" stroke-width="1"/><path d="M1.5 8.8L6 5.2 10.5 8.8Z" fill="#d6eefc"/><path d="M1.2 3.6L6 6.4 10.8 3.6" stroke="#4a9ccc" stroke-width="0.8" fill="none"/></svg>
<div class="t" style="left:48px;top:526.5px;letter-spacing:0.3px">2011.01.07 17:21</div>
<div class="t" style="left:133.5px;top:526.5px;">OANDA Corporation</div>
<div class="t" style="left:425px;top:526.5px;">Registration</div>
<div class="a" style="left:31px;top:540.3px;width:971px;height:15.3px;background:#ffffff;border-bottom:1px solid #d4d4d4"></div>
<svg class="a" style="left:31.5px;top:542.8px" width="12" height="10" viewBox="0 0 12 10"><path d="M0.8 9.2V4.2Q0.8 0.7 6 0.7Q11.2 0.7 11.2 4.2V9.2Z" fill="#86c8ee" stroke="#3a8ec2" stroke-width="1"/><path d="M1.5 8.8L6 5.2 10.5 8.8Z" fill="#d6eefc"/><path d="M1.2 3.6L6 6.4 10.8 3.6" stroke="#4a9ccc" stroke-width="0.8" fill="none"/></svg>
<div class="t" style="left:48px;top:541.8px;letter-spacing:0.3px">2007.09.25 16:00</div>
<div class="t" style="left:133.5px;top:541.8px;">OANDA Corporation</div>
<div class="t" style="left:425px;top:541.8px;">What Is Automated Trading?</div>
<div class="a" style="left:31px;top:555.6px;width:971px;height:15.3px;background:#e9e9e9;border-bottom:1px solid #d4d4d4"></div>
<svg class="a" style="left:31.5px;top:558.1px" width="12" height="10" viewBox="0 0 12 10"><path d="M0.8 9.2V4.2Q0.8 0.7 6 0.7Q11.2 0.7 11.2 4.2V9.2Z" fill="#86c8ee" stroke="#3a8ec2" stroke-width="1"/><path d="M1.5 8.8L6 5.2 10.5 8.8Z" fill="#d6eefc"/><path d="M1.2 3.6L6 6.4 10.8 3.6" stroke="#4a9ccc" stroke-width="0.8" fill="none"/></svg>
<div class="t" style="left:48px;top:557.1px;letter-spacing:0.3px">2007.09.25 15:58</div>
<div class="t" style="left:133.5px;top:557.1px;">OANDA Corporation</div>
<div class="t" style="left:425px;top:557.1px;">Mobile Trading - It's Easy!</div>
<div class="a" style="left:31px;top:570.9px;width:971px;height:15.3px;background:#ffffff;border-bottom:1px solid #d4d4d4"></div>
<svg class="a" style="left:31.5px;top:573.4px" width="12" height="10" viewBox="0 0 12 10"><path d="M0.8 9.2V4.2Q0.8 0.7 6 0.7Q11.2 0.7 11.2 4.2V9.2Z" fill="#86c8ee" stroke="#3a8ec2" stroke-width="1"/><path d="M1.5 8.8L6 5.2 10.5 8.8Z" fill="#d6eefc"/><path d="M1.2 3.6L6 6.4 10.8 3.6" stroke="#4a9ccc" stroke-width="0.8" fill="none"/></svg>
<div class="t" style="left:48px;top:572.4px;letter-spacing:0.3px">2007.09.25 15:56</div>
<div class="t" style="left:133.5px;top:572.4px;">OANDA Corporation</div>
<div class="t" style="left:425px;top:572.4px;">Welcome!</div>
<div class="a" style="left:129px;top:525px;width:1px;height:61.5px;background:#d4d4d4"></div>
<div class="a" style="left:421px;top:525px;width:1px;height:61.5px;background:#d4d4d4"></div>
<div class="a" style="left:30px;top:591.5px;width:973px;height:1px;background:#404040"></div>
<div class="a" style="left:181px;top:592px;width:43px;height:14px;background:#fff;border:1px solid #606060;border-top:none;border-radius:0 0 2px 2px"></div>
<div class="t" style="left:40.5px;top:594px;color:#8a8a80">Trade</div>
<div class="a" style="left:69.5px;top:595.5px;width:1px;height:9px;background:#8a8a80"></div>
<div class="t" style="left:77px;top:594px;color:#8a8a80">Account History</div>
<div class="a" style="left:143px;top:595.5px;width:1px;height:9px;background:#8a8a80"></div>
<div class="t" style="left:151px;top:594px;color:#8a8a80">Alerts</div>
<div class="t" style="left:187.5px;top:593.5px;">Mailbox</div>
<div class="t" style="left:231px;top:594px;color:#8a8a80">Journal</div>
<div class="a" style="left:266px;top:595.5px;width:1px;height:9px;background:#8a8a80"></div>
<div class="a" style="left:18px;top:607.3px;width:988px;height:1.3px;background:#f9f8f2"></div>
<div class="a" style="left:18px;top:609.6px;width:988px;height:1.2px;background:#c9c6b7"></div>
<div class="t" style="left:19.5px;top:614px;">For Help, press F1</div>
<div class="a" style="left:449px;top:612px;width:1px;height:13px;background:#cdcab8;border-right:1px solid #fff;width:2px"></div>
<div class="a" style="left:533.5px;top:612px;width:1px;height:13px;background:#cdcab8;border-right:1px solid #fff;width:2px"></div>
<div class="a" style="left:610px;top:612px;width:1px;height:13px;background:#cdcab8;border-right:1px solid #fff;width:2px"></div>
<div class="a" style="left:667.5px;top:612px;width:1px;height:13px;background:#cdcab8;border-right:1px solid #fff;width:2px"></div>
<div class="a" style="left:722.5px;top:612px;width:1px;height:13px;background:#cdcab8;border-right:1px solid #fff;width:2px"></div>
<div class="a" style="left:775.5px;top:612px;width:1px;height:13px;background:#cdcab8;border-right:1px solid #fff;width:2px"></div>
<div class="a" style="left:830px;top:612px;width:1px;height:13px;background:#cdcab8;border-right:1px solid #fff;width:2px"></div>
<div class="a" style="left:880px;top:612px;width:1px;height:13px;background:#cdcab8;border-right:1px solid #fff;width:2px"></div>
<div class="t" style="left:453.5px;top:614px;">Default</div>
<svg class="a" style="left:885px;top:615px" width="19" height="10" viewBox="0 0 19 10"><rect x="0.0" y="7.5" width="1.7" height="2.0" fill="#b8301e"/><rect x="0.0" y="0" width="1.7" height="7.5" fill="#62923a"/><rect x="2.3" y="6.8" width="1.7" height="2.8" fill="#b8301e"/><rect x="2.3" y="0" width="1.7" height="6.8" fill="#62923a"/><rect x="4.6" y="6.0" width="1.7" height="3.5" fill="#b8301e"/><rect x="4.6" y="0" width="1.7" height="6.0" fill="#62923a"/><rect x="6.9" y="5.2" width="1.7" height="4.2" fill="#b8301e"/><rect x="6.9" y="0" width="1.7" height="5.2" fill="#62923a"/><rect x="9.2" y="4.5" width="1.7" height="5.0" fill="#b8301e"/><rect x="9.2" y="0" width="1.7" height="4.5" fill="#62923a"/><rect x="11.5" y="3.8" width="1.7" height="5.8" fill="#b8301e"/><rect x="11.5" y="0" width="1.7" height="3.8" fill="#62923a"/><rect x="13.8" y="3.0" width="1.7" height="6.5" fill="#b8301e"/><rect x="13.8" y="0" width="1.7" height="3.0" fill="#62923a"/><rect x="16.1" y="2.2" width="1.7" height="7.2" fill="#b8301e"/><rect x="16.1" y="0" width="1.7" height="2.2" fill="#62923a"/></svg>
<div class="t" style="left:933px;top:614px;">12/0 kb</div>
</body></html>
